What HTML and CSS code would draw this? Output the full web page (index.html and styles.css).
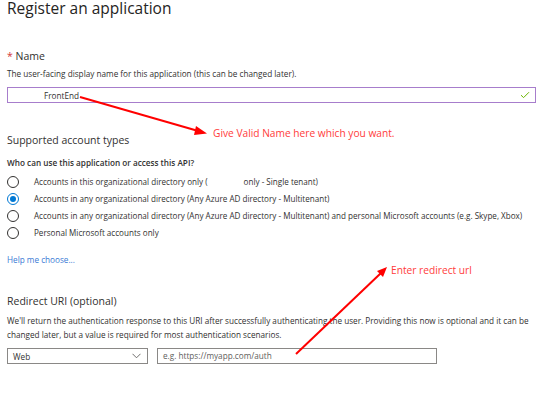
FILE: index.html
```html
<!DOCTYPE html>
<html>
<head>
<meta charset="utf-8">
<link rel="stylesheet" href="styles.css">
</head>
<body>
<div class="page">
  <h1 class="title">Register an application</h1>

  <div class="label name-label"><span class="req">*</span> Name</div>
  <div class="desc">The user-facing display name for this application (this can be changed later).</div>
  <div class="textbox">
    <span class="value">FrontEnd</span>
    <svg class="check" width="10" height="8" viewBox="0 0 10 8"><path d="M1 4.2 L3.6 6.6 L9 1.2" fill="none" stroke="#6bb700" stroke-width="1"/></svg>
  </div>

  <div class="label section">Supported account types</div>
  <div class="question">Who can use this application or access this API?</div>
  <div class="radios">
    <div class="radio"><span class="circle"></span><span>Accounts in this organizational directory only (<span class="gap"></span>only - Single tenant)</span></div>
    <div class="radio"><span class="circle on"></span><span>Accounts in any organizational directory (Any Azure AD directory - Multitenant)</span></div>
    <div class="radio"><span class="circle"></span><span>Accounts in any organizational directory (Any Azure AD directory - Multitenant) and personal Microsoft accounts (e.g. Skype, Xbox)</span></div>
    <div class="radio"><span class="circle"></span><span>Personal Microsoft accounts only</span></div>
  </div>
  <div class="help">Help me choose...</div>

  <div class="label redirect">Redirect URI (optional)</div>
  <div class="desc2">We'll return the authentication response to this URI after successfully authenticating the user. Providing this now is optional and it can be changed later, but a value is required for most authentication scenarios.</div>
  <div class="uri-row">
    <div class="select"><span>Web</span><svg width="9" height="6" viewBox="0 0 9 6"><path d="M0.5 0.8 L4.5 4.8 L8.5 0.8" fill="none" stroke="#605e5c" stroke-width="0.9"/></svg></div>
    <div class="uri">e.g. https://myapp.com/auth</div>
  </div>
</div>

<svg class="notes" width="554" height="411" viewBox="0 0 554 411">
  <line x1="80" y1="97" x2="200" y2="131.5" stroke="#ff0000" stroke-width="2"/>
  <polygon points="207,133.5 196,126 194,135" fill="#ff0000"/>
  <line x1="296" y1="354" x2="381" y2="273" stroke="#ff0000" stroke-width="2"/>
  <polygon points="387,267 377,271 383,277" fill="#ff0000"/>
  <text x="213" y="137" class="note">Give Valid Name here which you want.</text>
  <text x="391" y="274" class="note">Enter redirect url</text>
</svg>
</body>
</html>
```

FILE: styles.css
```css
html, body {
  margin: 0;
  padding: 0;
  background: #ffffff;
}
body {
  width: 554px;
  height: 411px;
  overflow: hidden;
  position: relative;
  font-family: "Open Sans", "Noto Sans", sans-serif;
  color: #323130;
}
.page {
  padding: 0 0 0 7px;
}
.title {
  margin: 0;
  font-size: 15.5px;
  font-weight: 400;
  line-height: 16px;
  color: #252423;
}
.label {
  font-size: 10.5px;
  line-height: 14px;
  color: #323130;
}
.name-label {
  margin-top: 33px;
}
.req {
  color: #d13438;
}
.desc {
  margin-top: 5px;
  font-size: 8.2px;
  line-height: 12px;
}
.textbox {
  margin-top: 7px;
  width: 527px;
  height: 14px;
  border: 1px solid #a77dcc;
  display: flex;
  align-items: center;
  justify-content: space-between;
  box-sizing: content-box;
}
.value {
  font-size: 8.2px;
  padding-left: 36px;
  color: #323130;
}
.check {
  margin-right: 5px;
}
.section {
  margin-top: 30px;
}
.question {
  margin-top: 10px;
  font-size: 8.2px;
  line-height: 12px;
  font-weight: 600;
}
.radios {
  margin-top: 4px;
  display: flex;
  flex-direction: column;
}
.radio {
  height: 17px;
  display: flex;
  align-items: center;
  gap: 15px;
  font-size: 8.1px;
}
.circle {
  width: 10px;
  height: 10px;
  border: 1px solid #323130;
  border-radius: 50%;
  box-sizing: content-box;
  position: relative;
  flex: none;
}
.circle.on {
  border-color: #0078d4;
}
.circle.on::after {
  content: "";
  position: absolute;
  left: 2px;
  top: 2px;
  width: 6px;
  height: 6px;
  border-radius: 50%;
  background: #0078d4;
}
.gap {
  display: inline-block;
  width: 36px;
}
.help {
  margin-top: 13px;
  font-size: 8.2px;
  line-height: 12px;
  color: #3a7bd5;
}
.redirect {
  margin-top: 28px;
}
.desc2 {
  margin-top: 6px;
  width: 535px;
  font-size: 8.2px;
  line-height: 14px;
}
.uri-row {
  margin-top: 6px;
  display: flex;
  gap: 9px;
}
.select {
  height: 14px;
  border: 1px solid #8a8886;
  display: flex;
  align-items: center;
  justify-content: space-between;
  padding: 0 6px 0 5px;
  font-size: 8.2px;
  box-sizing: content-box;
  width: 128px;
}
.uri {
  width: 273px;
  height: 14px;
  border: 1px solid #8a8886;
  padding-left: 5px;
  font-size: 8.2px;
  line-height: 14px;
  color: #605e5c;
}
.notes {
  position: absolute;
  left: 0;
  top: 0;
  pointer-events: none;
}
.note {
  font-family: "Open Sans", "Noto Sans", sans-serif;
  font-size: 10.2px;
  fill: #ff3b3b;
  font-weight: 500;
}
```
